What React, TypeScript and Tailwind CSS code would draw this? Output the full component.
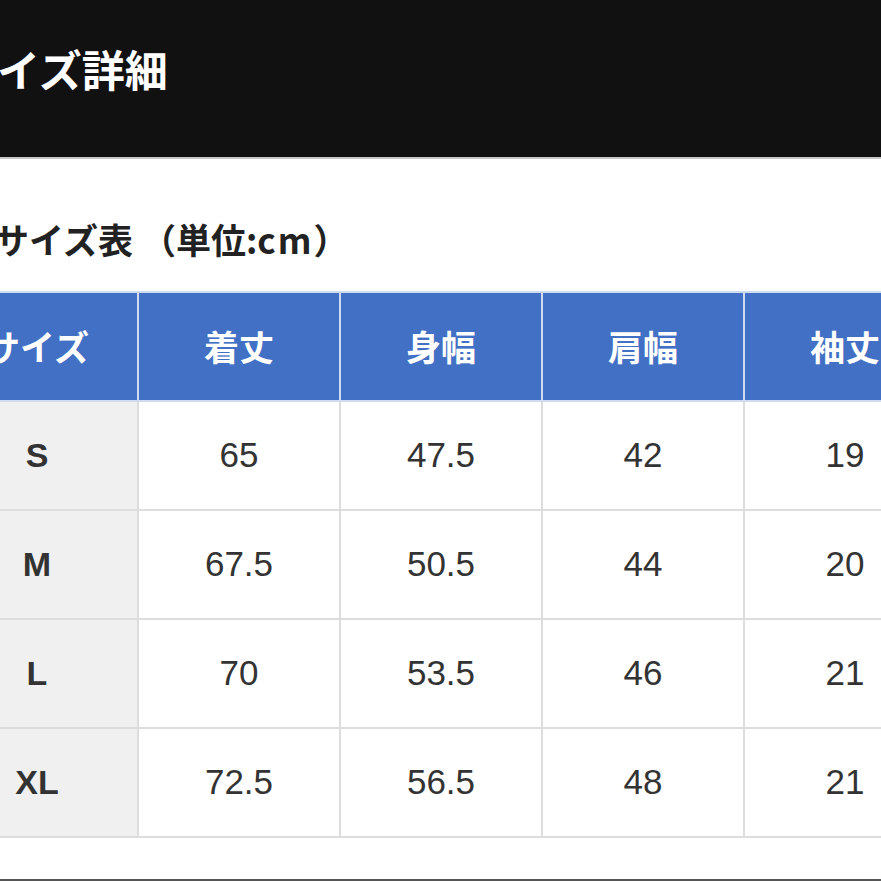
import React from "react";

type Row = {
  size: string;
  values: string[];
};

const columns = ["サイズ", "着丈", "身幅", "肩幅", "袖丈"];

const rows: Row[] = [
  { size: "S", values: ["65", "47.5", "42", "19"] },
  { size: "M", values: ["67.5", "50.5", "44", "20"] },
  { size: "L", values: ["70", "53.5", "46", "21"] },
  { size: "XL", values: ["72.5", "56.5", "48", "21"] },
];

const jp = "font-['Noto_Sans_CJK_JP','Noto_Sans',sans-serif]";
const num = "font-['Liberation_Sans',Arial,sans-serif]";

export default function App() {
  return (
    <div className="w-[881px] h-[881px] overflow-hidden bg-white flex flex-col">
      {/* HEADER */}
      <div className="h-[159px] shrink-0 bg-[#111111] border-b-2 border-[#c8c8c8] flex items-center pb-[21px]">
        <h1
          className={`${jp} ml-[-46px] text-[43px] leading-none font-bold text-white whitespace-nowrap`}
        >
          サイズ詳細
        </h1>
      </div>

      {/* SUBTITLE */}
      <h2
        className={`${jp} mt-[62px] ml-[-6px] text-[35px] leading-none font-bold text-[#222] whitespace-nowrap`}
      >
        サイズ表<span className="ml-[8px]">（</span>単位:<span className="tracking-[2px]">cm</span>）
      </h2>

      {/* TABLE */}
      <div className="mt-[35px] ml-[-65px] w-max bg-[#dddddd] p-[2px] flex flex-col gap-[2px]">
        <div className="flex gap-[2px] bg-[#cfdbef] -m-[2px] p-[2px]">
          {columns.map((c) => (
            <div
              key={c}
              className={`${jp} w-[200px] h-[107px] bg-[#4170c4] flex items-center justify-center text-[35px] font-bold text-white`}
            >
              {c}
            </div>
          ))}
        </div>
        {rows.map((r) => (
          <div key={r.size} className="flex gap-[2px]">
            <div
              className={`${num} w-[200px] h-[107px] bg-[#f0f0f0] flex items-center justify-center text-[34px] font-bold text-[#333]`}
            >
              {r.size}
            </div>
            {r.values.map((v, i) => (
              <div
                key={i}
                className={`${num} w-[200px] h-[107px] bg-white flex items-center justify-center text-[35px] text-[#333]`}
              >
                {v}
              </div>
            ))}
          </div>
        ))}
      </div>

      <div className="flex-1" />
      <div className="h-[2px] shrink-0 bg-[#555555]" />
    </div>
  );
}
